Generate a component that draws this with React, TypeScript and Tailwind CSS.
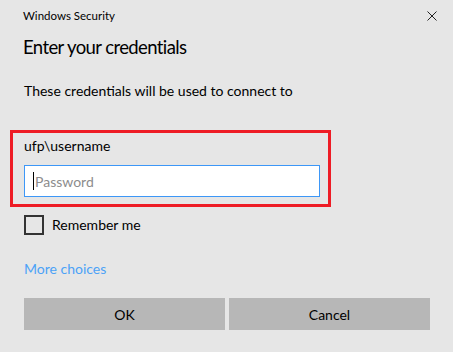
export default function App() {
  return (
    <div
      className="relative w-[453px] h-[352px] bg-[#e6e6e6] text-[#000] overflow-hidden"
      style={{ fontFamily: 'Lato, "Noto Sans", sans-serif' }}
    >
      {/* title bar */}
      <div className="flex items-center justify-between h-[31px] pl-[23px] pr-[16px]">
        <span className="text-[11.5px] leading-none">Windows Security</span>
        <svg width="10" height="10" viewBox="0 0 10 10" className="text-[#222]">
          <path d="M0.5 0.5 L9.5 9.5 M9.5 0.5 L0.5 9.5" stroke="currentColor" strokeWidth="1" />
        </svg>
      </div>

      <div className="pl-[23px] text-[18.5px] tracking-[-0.6px] leading-[28px] mt-[2px]">Enter your credentials</div>

      <div className="pl-[24px] mt-[20px] text-[14px] leading-[20px]">
        These credentials will be used to connect to
      </div>

      {/* highlighted credential block */}
      <div className="ml-[10px] mt-[29px] w-[321px] h-[77px] border-[3px] border-[#ee1c25] pl-[11px] pt-[3px]">
        <div className="text-[14px] leading-[20px]">ufp\username</div>
        <div className="mt-[9px] w-[296px] h-[32px] bg-white border border-[#3d97f7] flex items-center pl-[8px]">
          <span className="w-px h-[18px] bg-black" />
          <span className="text-[14px] text-[#8c8c8c] ml-[1px]">Password</span>
        </div>
      </div>

      <div className="flex items-center pl-[24px] mt-[8px]">
        <span className="w-[20px] h-[20px] border-2 border-[#333]" />
        <span className="ml-[8px] text-[14px] leading-[20px]">Remember me</span>
      </div>

      <div className="pl-[24px] mt-[24px] text-[14px] leading-[20px] text-[#4ca2f7]">More choices</div>

      <div className="flex gap-[4px] pl-[24px] mt-[19px]">
        <button className="w-[201px] h-[32px] bg-[#b7b7b7] text-[14px]">OK</button>
        <button className="w-[201px] h-[32px] bg-[#b7b7b7] text-[14px]">Cancel</button>
      </div>
    </div>
  )
}
